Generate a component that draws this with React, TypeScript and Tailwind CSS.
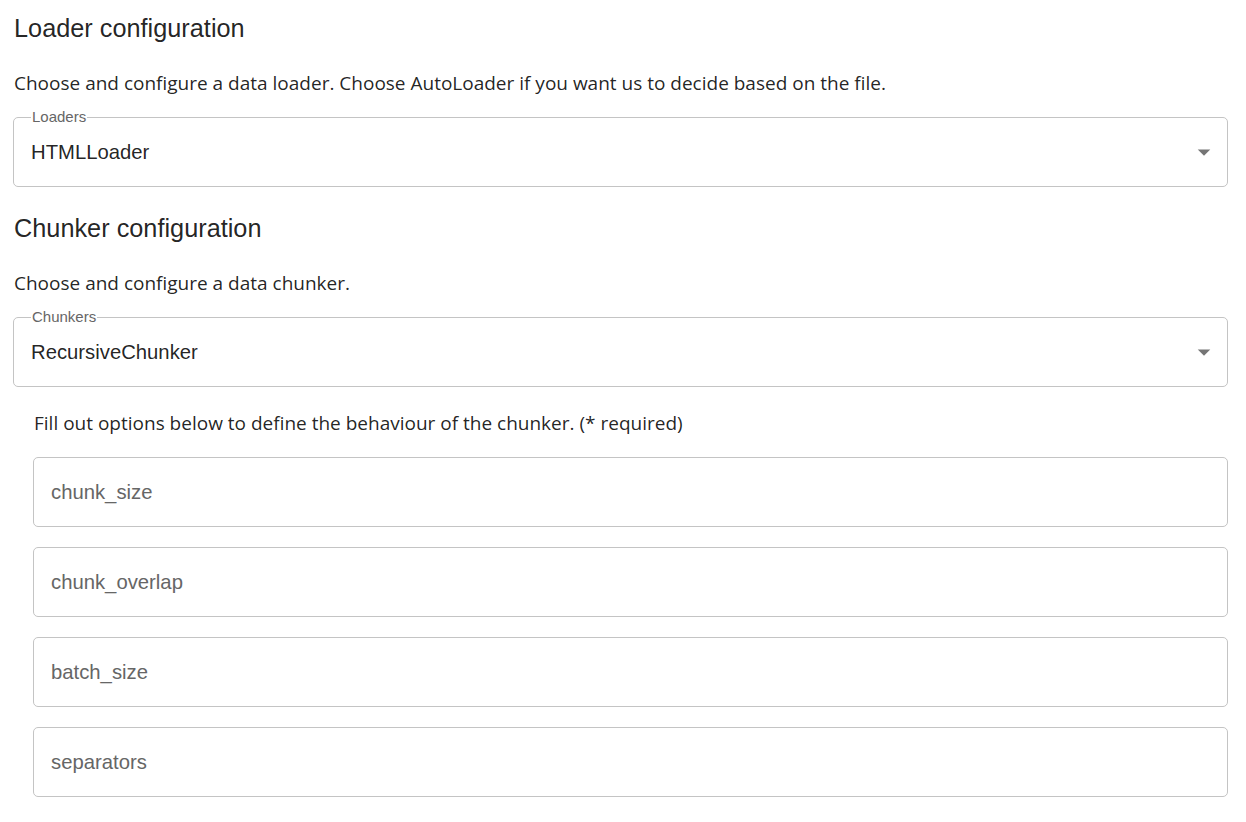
import React from "react";

function Arrow() {
  return (
    <svg viewBox="0 0 24 24" width="30" height="30" className="absolute right-[8px] top-1/2 -translate-y-1/2" fill="rgba(0,0,0,0.54)">
      <path d="M7 10l5 5 5-5z" />
    </svg>
  );
}

function SelectBox({ label, value }: { label: string; value: string }) {
  return (
    <div className="relative h-[70px] rounded-[5px] border border-[#c4c4c4] bg-white">
      <span className="absolute left-[17px] top-[-10px] bg-white px-[1px] font-['Liberation_Sans',Arial,sans-serif] text-[15px] leading-[18px] text-[#666666]">
        {label}
      </span>
      <div className="flex h-full items-center pl-[17px] font-['Liberation_Sans',Arial,sans-serif] text-[20.3px] text-[rgba(0,0,0,0.87)]">
        {value}
      </div>
      <Arrow />
    </div>
  );
}

function TextBox({ label }: { label: string }) {
  return (
    <div className="flex h-[70px] items-center rounded-[5px] border border-[#c4c4c4] bg-white pl-[17px]">
      <span className="font-['Liberation_Sans',Arial,sans-serif] text-[20.3px] text-[#666666]">{label}</span>
    </div>
  );
}

function Heading({ children, className = "" }: { children: React.ReactNode; className?: string }) {
  return (
    <h6 className={`h-[40px] pl-[1px] font-['Liberation_Sans',Arial,sans-serif] text-[25.3px] leading-[40px] text-[rgba(0,0,0,0.87)] ${className}`}>
      {children}
    </h6>
  );
}

function Body({ children, className = "" }: { children: React.ReactNode; className?: string }) {
  return (
    <p className={`h-[30px] pl-[1px] font-['Segoe_UI','Open_Sans','Noto_Sans',sans-serif] text-[19px] leading-[30px] text-[rgba(0,0,0,0.87)] ${className}`}>
      {children}
    </p>
  );
}

export default function App() {
  return (
    <div className="min-h-[822px] w-[1246px] bg-white">
      <div className="flex w-[1228px] flex-col pl-[13px] pt-[8px]">
        <Heading>Loader configuration</Heading>
        <Body className="mt-[20px]">
          Choose and configure a data loader. Choose AutoLoader if you want us to decide based on the file.
        </Body>
        <div className="mt-[19px]">
          <SelectBox label="Loaders" value="HTMLLoader" />
        </div>
        <Heading className="mt-[21px]">Chunker configuration</Heading>
        <Body className="mt-[20px]">Choose and configure a data chunker.</Body>
        <div className="mt-[19px]">
          <SelectBox label="Chunkers" value="RecursiveChunker" />
        </div>
        <div className="flex flex-col pl-[20px]">
          <Body className="mt-[21px]">
            Fill out options below to define the behaviour of the chunker. (* required)
          </Body>
          <div className="mt-[19px] flex flex-col gap-[20px]">
            <TextBox label="chunk_size" />
            <TextBox label="chunk_overlap" />
            <TextBox label="batch_size" />
            <TextBox label="separators" />
          </div>
        </div>
      </div>
    </div>
  );
}
